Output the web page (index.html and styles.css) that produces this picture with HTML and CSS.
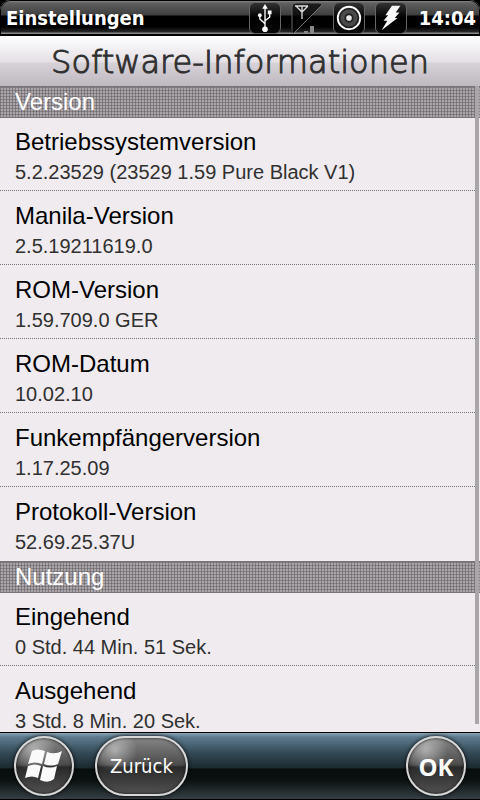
FILE: index.html
```html
<!DOCTYPE html>
<html lang="de">
<head>
  <meta charset="UTF-8" />
  <meta name="viewport" content="width=device-width, initial-scale=1" />
  <title>Einstellungen</title>
  <link rel="stylesheet" href="styles.css">
</head>
<body>
  <header class="statusbar">
    <span class="app-name">Einstellungen</span>
    <div class="status-icons">
      <svg class="status-icon" viewBox="0 0 32 32" role="img" aria-label="USB">
        <g fill="none" stroke="#f4f4f4" stroke-width="1.5">
          <path d="M16 4V27M10.500 13v4l5.500 5M21 10v5l-5 4" />
        </g>
        <path d="M16 1l-3 5h6z" fill="#fff" />
        <circle cx="16" cy="28" r="3" fill="#fff" />
        <circle cx="10.500" cy="13" r="2" fill="#fff" />
        <path d="M19 8h4v4h-4z" fill="#fff" />
      </svg>
      <svg class="status-icon signal" viewBox="0 0 32 32" role="img" aria-label="Signal">
        <path d="M1 31V5q0-4 4-4h23q3 0 3 2L3 31z" fill="#000" fill-opacity=".7" />
        <path d="M1 31V5q0-4 4-4h23q3 0 3 2" fill="none" stroke="#666" />
        <path d="M31 3L3 31" stroke="#777" />
        <path d="M4 4h13M5 4l6 6 6-6M11 4v13" fill="none" stroke="#ddd" stroke-width="1.300" />
        <path d="M13 29h4v3h-4zM19 24h4v8h-4z" fill="#888" />
      </svg>
      <svg class="status-icon" viewBox="0 0 32 32" role="img" aria-label="Lautsprecher">
        <circle cx="16" cy="16" r="12" fill="#222" stroke="#fff" stroke-width="2" />
        <circle cx="16" cy="16" r="7" fill="none" stroke="#4a4a4a" stroke-width="4" />
        <circle cx="16" cy="16" r="3" fill="#e8e8e8" />
      </svg>
      <svg class="status-icon" viewBox="0 0 32 32" role="img" aria-label="Akku wird geladen">
        <path d="M17 3h9l-5 7h4l-5 6h3L6 29l6-10H8l5-6h-3z" fill="#f7f7f7" />
      </svg>
    </div>
    <time class="clock">14:04</time>
  </header>

  <h1 class="title">Software-Informationen</h1>

  <main class="content">
    <section>
      <h2 class="section-title">Version</h2>
      <dl class="rows">
        <div class="row"><dt>Betriebssystemversion</dt><dd>5.2.23529 (23529 1.59 Pure Black V1)</dd></div>
        <div class="row"><dt>Manila-Version</dt><dd>2.5.19211619.0</dd></div>
        <div class="row"><dt>ROM-Version</dt><dd>1.59.709.0 GER</dd></div>
        <div class="row"><dt>ROM-Datum</dt><dd>10.02.10</dd></div>
        <div class="row"><dt>Funkempfängerversion</dt><dd>1.17.25.09</dd></div>
        <div class="row"><dt>Protokoll-Version</dt><dd>52.69.25.37U</dd></div>
      </dl>
    </section>
    <section>
      <h2 class="section-title">Nutzung</h2>
      <dl class="rows">
        <div class="row"><dt>Eingehend</dt><dd>0 Std. 44 Min. 51 Sek.</dd></div>
        <div class="row"><dt>Ausgehend</dt><dd>3 Std. 8 Min. 20 Sek.</dd></div>
      </dl>
    </section>
    <div class="scroll-thumb"></div>
  </main>

  <footer class="softkeys">
    <button class="key round" aria-label="Start">
      <svg class="flag" viewBox="0 0 38 36" aria-hidden="true">
        <g fill="#fafafa">
          <path d="M7 3Q12 0 20 3L17 16Q10 13 3 16z" />
          <path d="M22 4Q30 7 37 3L33 16Q26 19 19 16z" />
          <path d="M3 18Q10 15 16 18L13 30Q7 27 0 30z" />
          <path d="M18 18Q25 21 32 18L29 31Q23 36 15 32z" />
        </g>
      </svg>
    </button>
    <button class="key">Zurück</button>
    <button class="key round ok">OK</button>
  </footer>
</body>
</html>
```

FILE: styles.css
```css
* {
  box-sizing: border-box;
}

body {
  display: flex;
  flex-direction: column;
  height: 100vh;
  margin: 0;
  overflow: hidden;
  background: #efebef;
  font-family: "Liberation Sans", Arial, sans-serif;
}

h1, h2, dl, dd {
  margin: 0;
  font-weight: normal;
}

/* top bar */
.statusbar {
  display: flex;
  flex: none;
  align-items: center;
  height: 36px;
  padding: 0 3px 0 5px;
  border: 1px solid #000;
  border-bottom-width: 2px;
  border-radius: 10px 10px 0 0;
  background: linear-gradient(#858585 0, #606060 2px, #3e3e3e 14px, #000 15px, #000 26px, #292929 31px, #888 32px);
  box-shadow: 0 -10px 0 10px #000;
  color: #fff;
  font: bold 20px "DejaVu Sans Condensed", "DejaVu Sans", sans-serif;
}

.status-icons {
  display: flex;
  gap: 10px;
  margin-left: auto;
}

.status-icon {
  width: 32px;
  height: 32px;
  border: 1px solid #666;
  border-radius: 6px;
  background: linear-gradient(#333, #000 50%, #080808);
}

.status-icon.signal {
  border: 0;
  background: none;
}

.clock {
  margin-left: 12px;
}

/* heading */
.title {
  position: relative;
  flex: none;
  height: 50px;
  background: linear-gradient(#fff 0, #e4e0e5 26px, #d6d2d7 27px, #bdb9be 100%);
  color: #303030;
  font: 200 32px/52px "DejaVu Sans", sans-serif;
  text-align: center;
  -webkit-text-stroke: 1px #303030;
}

/* list */
.content {
  position: relative;
  flex: 1;
  min-height: 0;
  overflow: hidden;
}

.section-title {
  height: 32px;
  padding: 0 15px;
  border-top: 1px solid #777377;
  border-bottom: 1px solid #777377;
  background:
    repeating-linear-gradient(90deg, rgba(90, 86, 90, .5) 0 1px, transparent 1px 3px),
    repeating-linear-gradient(#848084 0 1px, #a9a5a9 1px 3px);
  color: #fff;
  font-size: 24px;
  line-height: 30px;
}

.row {
  height: 74px;
  padding: 9px 15px 0;
  background: linear-gradient(90deg, #777 50%, transparent 50%) 0 72px / 2px 1px repeat-x;
}

.row:last-child {
  height: 73px;
  background: none;
}

.row dt {
  color: #000;
  font-size: 24px;
  line-height: 30px;
}

.row dd {
  color: #303030;
  font-size: 20px;
  line-height: 30px;
}

.scroll-thumb {
  position: absolute;
  top: 0;
  right: 1px;
  bottom: 8px;
  width: 4px;
  background: #a9a6aa;
}

/* bottom bar */
.softkeys {
  display: flex;
  flex: none;
  align-items: center;
  gap: 21px;
  height: 68px;
  padding: 0 14px;
  border-top: 1px solid #000;
  border-bottom: 1px solid #000;
  background: linear-gradient(#8aa7b9 0, #5d7b8d 4px, #344956 20px, #1b2930 35px, #070c0d 36px, #0b1011 47px, #344044 100%);
}

.key {
  height: 60px;
  padding: 0 13px;
  border: 2px solid #d7d7d7;
  border-radius: 30px;
  background:
    radial-gradient(circle at 18px 12px, rgba(255, 255, 255, .45), transparent 22px),
    linear-gradient(#858585, #4b4b4b 48%, #292929 52%, #515151);
  box-shadow: 0 0 4px #000, inset 0 0 3px #111;
  color: #fff;
  font: 20px "DejaVu Sans Condensed", "DejaVu Sans", sans-serif;
}

.key.round {
  width: 60px;
  padding: 0;
}

.key.ok {
  margin-left: auto;
  font: bold 24px "Open Sans", sans-serif;
}

.flag {
  display: block;
  width: 38px;
  height: 36px;
  margin: auto;
}
```
